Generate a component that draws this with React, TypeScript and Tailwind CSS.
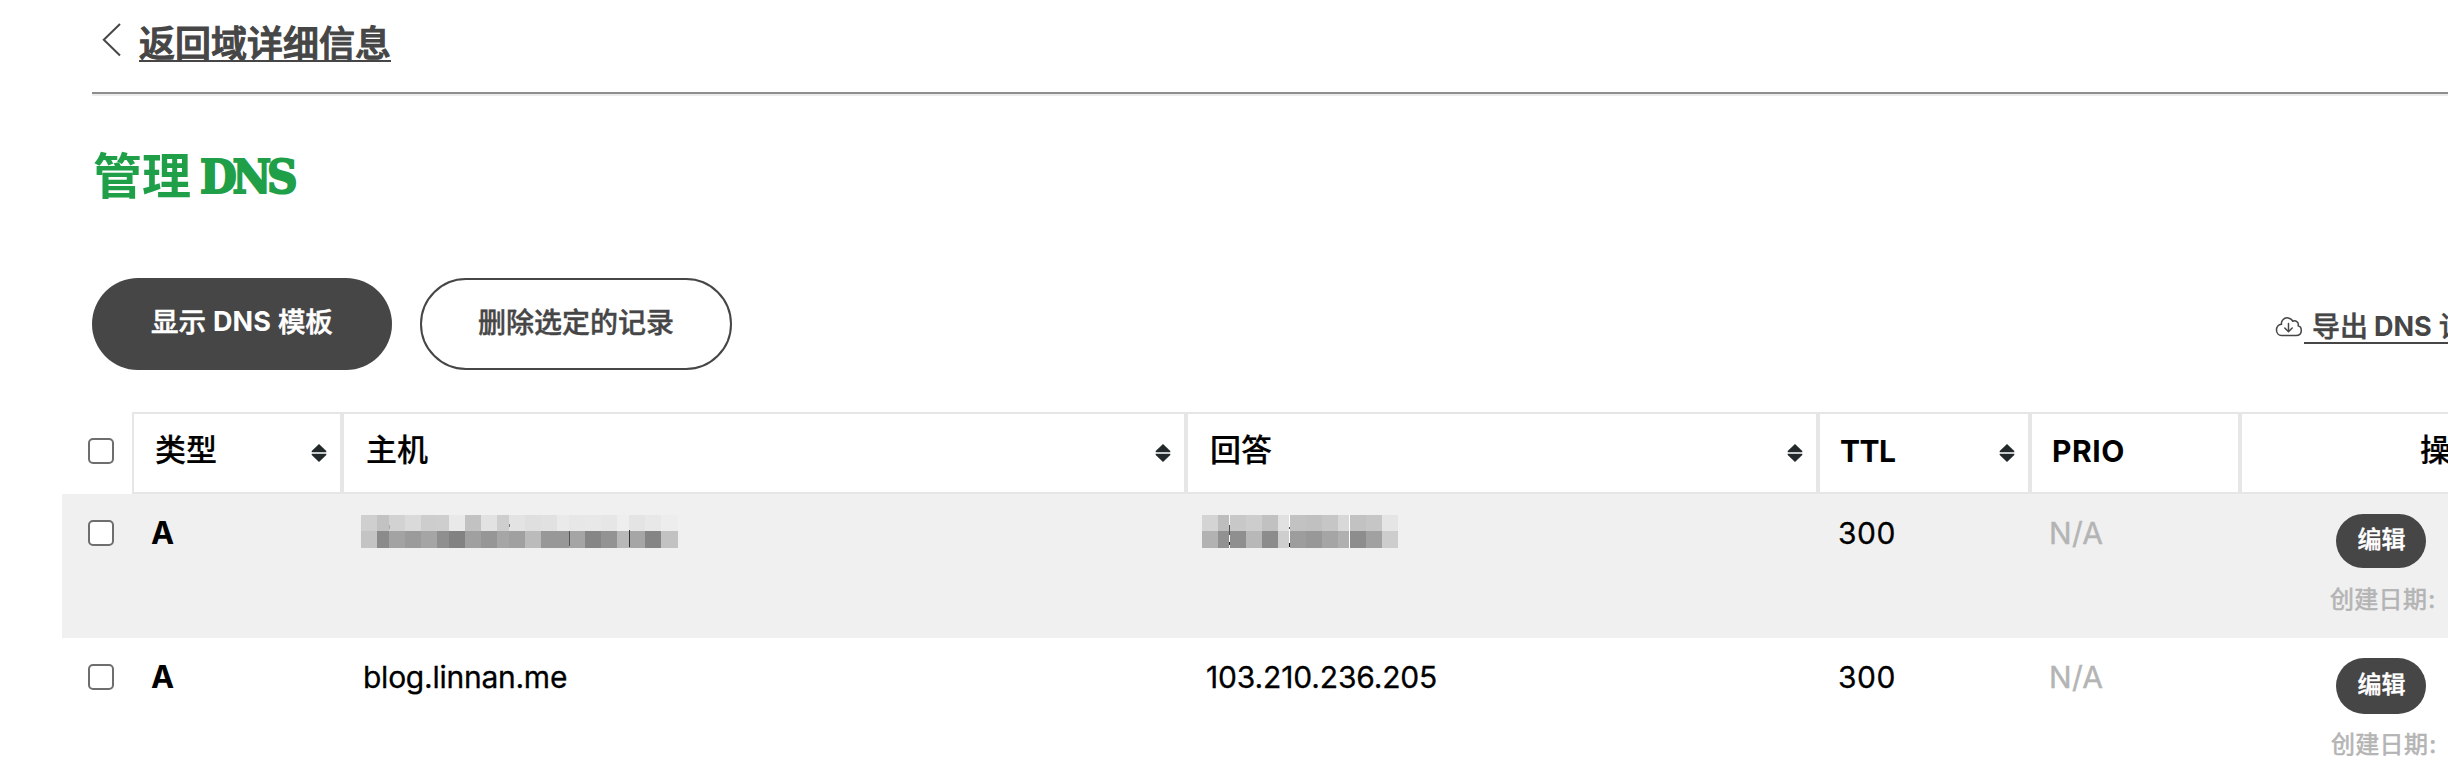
import React from "react";

const latin = "font-['Inter','Noto_Sans_CJK_SC',sans-serif]";

type Tile = [number, number, string, string];

const hostTiles: Tile[] = [
  [0, 16, "#cfcfcf", "#c4c4c4"],
  [16, 12, "#c2c2c2", "#8b8b8b"],
  [28, 16, "#d2d2d2", "#a3a3a3"],
  [44, 16, "#dadada", "#9b9b9b"],
  [60, 16, "#cdcdcd", "#a5a5a5"],
  [76, 12, "#cecece", "#8f8f8f"],
  [88, 16, "#e9e9e9", "#828282"],
  [104, 16, "#c2c2c2", "#a0a0a0"],
  [120, 16, "#e2e2e2", "#969696"],
  [136, 12, "#cecece", "#a6a6a6"],
  [148, 16, "#e3e3e3", "#a0a0a0"],
  [164, 16, "#dfdfdf", "#bbbbbb"],
  [180, 16, "#e1e1e1", "#989898"],
  [196, 12, "#eaeaea", "#989898"],
  [208, 16, "#e7e7e7", "#a5a5a5"],
  [224, 16, "#e8e8e8", "#868686"],
  [240, 16, "#e6e6e6", "#939393"],
  [256, 12, "#eeeeee", "#b8b8b8"],
  [268, 16, "#e4e4e4", "#a6a6a6"],
  [284, 16, "#e8e8e8", "#858585"],
  [300, 17, "#ededed", "#c2c2c2"],
];

const answerTiles: Tile[] = [
  [0, 16, "#d4d4d4", "#b2b2b2"],
  [16, 12, "#bdbdbd", "#919191"],
  [28, 16, "#c8c8c8", "#8f8f8f"],
  [44, 16, "#cdcdcd", "#b8b8b8"],
  [60, 16, "#c1c1c1", "#8c8c8c"],
  [76, 12, "#e1e1e1", "#cecece"],
  [88, 16, "#c2c2c2", "#9d9d9d"],
  [104, 16, "#c0c0c0", "#989898"],
  [120, 16, "#c6c6c6", "#a5a5a5"],
  [136, 12, "#d8d8d8", "#b0b0b0"],
  [148, 16, "#c2c2c2", "#8d8d8d"],
  [164, 16, "#c6c6c6", "#a1a1a1"],
  [180, 16, "#e5e5e5", "#cdcdcd"],
];

function Mosaic({ tiles, width, children }: { tiles: Tile[]; width: number; children?: React.ReactNode }) {
  return (
    <svg width={width} height={33} viewBox={`0 0 ${width} 33`} shapeRendering="crispEdges" className="block">
      {tiles.map(([x, w, top, bottom]) => (
        <g key={x}>
          <rect x={x} y={0} width={w} height={17} fill={top} />
          <rect x={x} y={16.4} width={w} height={16.4} fill={bottom} />
        </g>
      ))}
      {children}
    </svg>
  );
}

function SortIcon() {
  return (
    <svg width="16" height="18" viewBox="0 0 16 18" className="block">
      <path d="M8 0 L15.3 7 V8 H0.7 V7 Z" fill="#23292b" />
      <rect x="0.7" y="8" width="14.6" height="2" fill="#c8cbcc" />
      <path d="M0.7 10 H15.3 V11 L8 18 L0.7 11 Z" fill="#23292b" />
    </svg>
  );
}

function Check() {
  return <div className="size-[26px] rounded-[5px] border-2 border-[#6e6e6e] bg-white" />;
}

function HeadCell({ width, sortable, children }: { width: string; sortable?: boolean; children: React.ReactNode }) {
  return (
    <div className={`flex h-[82px] shrink-0 items-center justify-between border-2 border-[#e6e6e6] pl-5 pr-[13px] pb-[5px] ${width}`}>
      <span className="whitespace-nowrap">{children}</span>
      {sortable && (
        <span className="pt-[5px]">
          <SortIcon />
        </span>
      )}
    </div>
  );
}

function Cjk({ children }: { children: React.ReactNode }) {
  return <span className="text-[31px] font-medium [-webkit-text-stroke:0.2px_#000]">{children}</span>;
}

function Row({ shaded, host, answer }: { shaded?: boolean; host: React.ReactNode; answer: React.ReactNode }) {
  return (
    <div className={`ml-[62px] flex shrink-0 text-[30px] leading-[38px] text-black ${shaded ? "h-36 bg-[#f0f0f0]" : "h-[146px]"}`}>
      <div className="w-[90px] shrink-0 pl-[26px] pt-[26px]">
        <Check />
      </div>
      <div className="-ml-px w-[211px] shrink-0 pt-5 text-[31px] font-bold">A</div>
      <div className="w-[844px] shrink-0">{host}</div>
      <div className="w-[632px] shrink-0">{answer}</div>
      <div className="w-[212px] shrink-0 pt-5 tracking-[0.5px] [-webkit-text-stroke:0.3px_#000]">300</div>
      <div className="-ml-px w-[211px] shrink-0 pt-5 tracking-[0.3px] text-[#b4b4b4] [-webkit-text-stroke:0.4px_#b4b4b4]">N/A</div>
      <div className="flex w-[120px] shrink-0 flex-col pl-[70px] pt-5">
        <button className={`ml-[6px] flex w-[90px] shrink-0 items-center justify-center rounded-[28px] bg-[#464646] pb-0.5 pl-px text-2xl font-medium text-white [-webkit-text-stroke:0.4px_#fff] ${shaded ? "h-[54px]" : "h-14"}`}>
          <span className="whitespace-nowrap">编辑</span>
        </button>
        <div className={`whitespace-nowrap text-2xl leading-9 tracking-[0.3px] text-[#b4b4b4] [-webkit-text-stroke:0.6px_#b4b4b4] ${shaded ? "mt-[14px]" : "mt-[13px] ml-px"}`}>
          创建日期<span className="ml-px">:</span>
        </div>
      </div>
    </div>
  );
}

export default function App() {
  return (
    <div lang="zh-CN" className={`flex h-[784px] w-[2448px] flex-col overflow-hidden bg-white ${latin}`}>
      <div className="ml-[92px] flex h-[96px] shrink-0 flex-col justify-between">
        <div className="flex pl-[10px] pt-[17px]">
          <svg width="20" height="36" viewBox="0 0 20 36" fill="none" stroke="#464646" strokeWidth="2" className="mt-1">
            <path d="M18 3 L1.8 18.8 L18 34.5" />
          </svg>
          <a className="ml-[17px] h-[45px] whitespace-nowrap border-b-2 border-[#464646] text-[36px] leading-[55px] font-medium text-[#464646] [-webkit-text-stroke:1.1px_#464646]">
            返回域详细信息
          </a>
        </div>
        <div className="h-1 border-t-2 border-b-2 border-t-[#8e8e8e] border-b-[#ececec]" />
      </div>

      <h1 className="ml-[93px] mt-[46px] flex h-[70px] shrink-0 items-center whitespace-nowrap text-[#1f9f48]">
        <span className="text-[49px] leading-[70px] font-bold">管理</span>
        <span className="ml-[9px] font-['DejaVu_Serif'] text-[47px] leading-[70px] font-bold tracking-[-4.2px] [font-stretch:condensed] [-webkit-text-stroke:2px_#1f9f48]">DNS</span>
      </h1>

      <div className="ml-[92px] mt-[66px] flex h-[92px] shrink-0 items-center">
        <button className="flex h-[92px] w-[300px] shrink-0 items-center justify-center rounded-full bg-[#464646] pb-[3px] text-[27.5px] font-bold text-white">
          <span className="font-medium [-webkit-text-stroke:0.5px_#fff]">显示</span>
          <span className="mx-[7px] text-[27px]">DNS</span>
          <span className="font-medium [-webkit-text-stroke:0.5px_#fff]">模板</span>
        </button>
        <button className="ml-7 flex h-[92px] w-[312px] shrink-0 items-center justify-center rounded-full border-2 border-[#464646] pb-[3px] text-[28px] font-medium text-[#464646] [-webkit-text-stroke:0.4px_#464646]">
          删除选定的记录
        </button>
        <div className="ml-[1543px] flex shrink-0 items-center pt-1.5 text-[#464646]">
          <svg width="28" height="22" viewBox="0 0 28 22" fill="none" stroke="#464646" strokeWidth="1.5" strokeLinecap="round" strokeLinejoin="round">
            <path d="M6.5 19.5 H21 C24.5 19.5 26.3 17.5 26.3 14.5 C26.3 12 25 10.3 23.2 9.8 C24 6.2 20.5 3.8 17.8 5.3 C16 1.2 10.5 0.8 7.9 3.8 C6.8 5 6.2 6.8 6.5 8.3 C3.5 8.5 1.5 11 1.5 14 C1.5 17 3.5 19.5 6.5 19.5 Z" />
            <path d="M13.5 7.5 V15.5 M9.8 12 L13.5 15.7 L17.2 12" />
          </svg>
          <a className="ml-[1px] flex h-[34px] whitespace-nowrap border-b-2 border-[#464646] pl-2 text-[28px] leading-[34px] font-medium">
            <span className="[-webkit-text-stroke:0.4px_#464646]">导出</span>
            <span className="ml-1.5 mr-[7px] text-[27px] font-bold">DNS</span>
            <span className="[-webkit-text-stroke:0.4px_#464646]">记</span>
          </a>
        </div>
      </div>

      <div className="mt-[42px] flex shrink-0 text-[30px] font-bold text-black">
        <div className="w-[132px] shrink-0 pl-[88px] pt-[26px]">
          <Check />
        </div>
        <HeadCell width="w-[210px]" sortable><span className="pl-px"><Cjk>类型</Cjk></span></HeadCell>
        <HeadCell width="w-[844px]" sortable><span className="pl-0.5"><Cjk>主机</Cjk></span></HeadCell>
        <HeadCell width="w-[632px]" sortable><span className="pl-0.5"><Cjk>回答</Cjk></span></HeadCell>
        <HeadCell width="w-[212px]" sortable><span className="block pt-0.5 tracking-[-0.5px]">TTL</span></HeadCell>
        <HeadCell width="w-[210px]"><span className="block pt-0.5 tracking-[0.6px]">PRIO</span></HeadCell>
        <div className="h-[82px] w-[400px] shrink-0 border-2 border-[#e6e6e6] pt-[13px] pl-[178px]"><Cjk>操</Cjk></div>
      </div>

      <Row
        shaded
        host={
          <div className="-ml-px pt-[21px]">
            <Mosaic tiles={hostTiles} width={317}>
              <rect x="208" y="16" width="1" height="15" fill="#555" />
              <rect x="268" y="15" width="1" height="17" fill="#333" />
              <rect x="28" y="10" width="1" height="4" fill="#aaa" />
              <rect x="148" y="9" width="1" height="3" fill="#777" />
            </Mosaic>
          </div>
        }
        answer={
          <div className="-ml-1 pt-[21px]">
            <Mosaic tiles={answerTiles} width={196}>
              <rect x="27" y="0" width="1" height="33" fill="#f6f6f6" />
              <rect x="87" y="0" width="1" height="33" fill="#fff" />
              <rect x="147" y="0" width="1" height="33" fill="#fff" />
              <rect x="27" y="10" width="1" height="10" fill="#555" />
              <rect x="27" y="27" width="1" height="3" fill="#222" />
              <rect x="87" y="12" width="1" height="2" fill="#555" />
              <rect x="87" y="28" width="1" height="4" fill="#111" />
            </Mosaic>
          </div>
        }
      />
      <Row
        host={<div className="pt-5 pl-px tracking-[-0.25px] [-webkit-text-stroke:0.3px_#000]">blog.linnan.me</div>}
        answer={<div className="pt-5 tracking-[-0.15px] [-webkit-text-stroke:0.3px_#000]">103.210.236.205</div>}
      />
    </div>
  );
}
